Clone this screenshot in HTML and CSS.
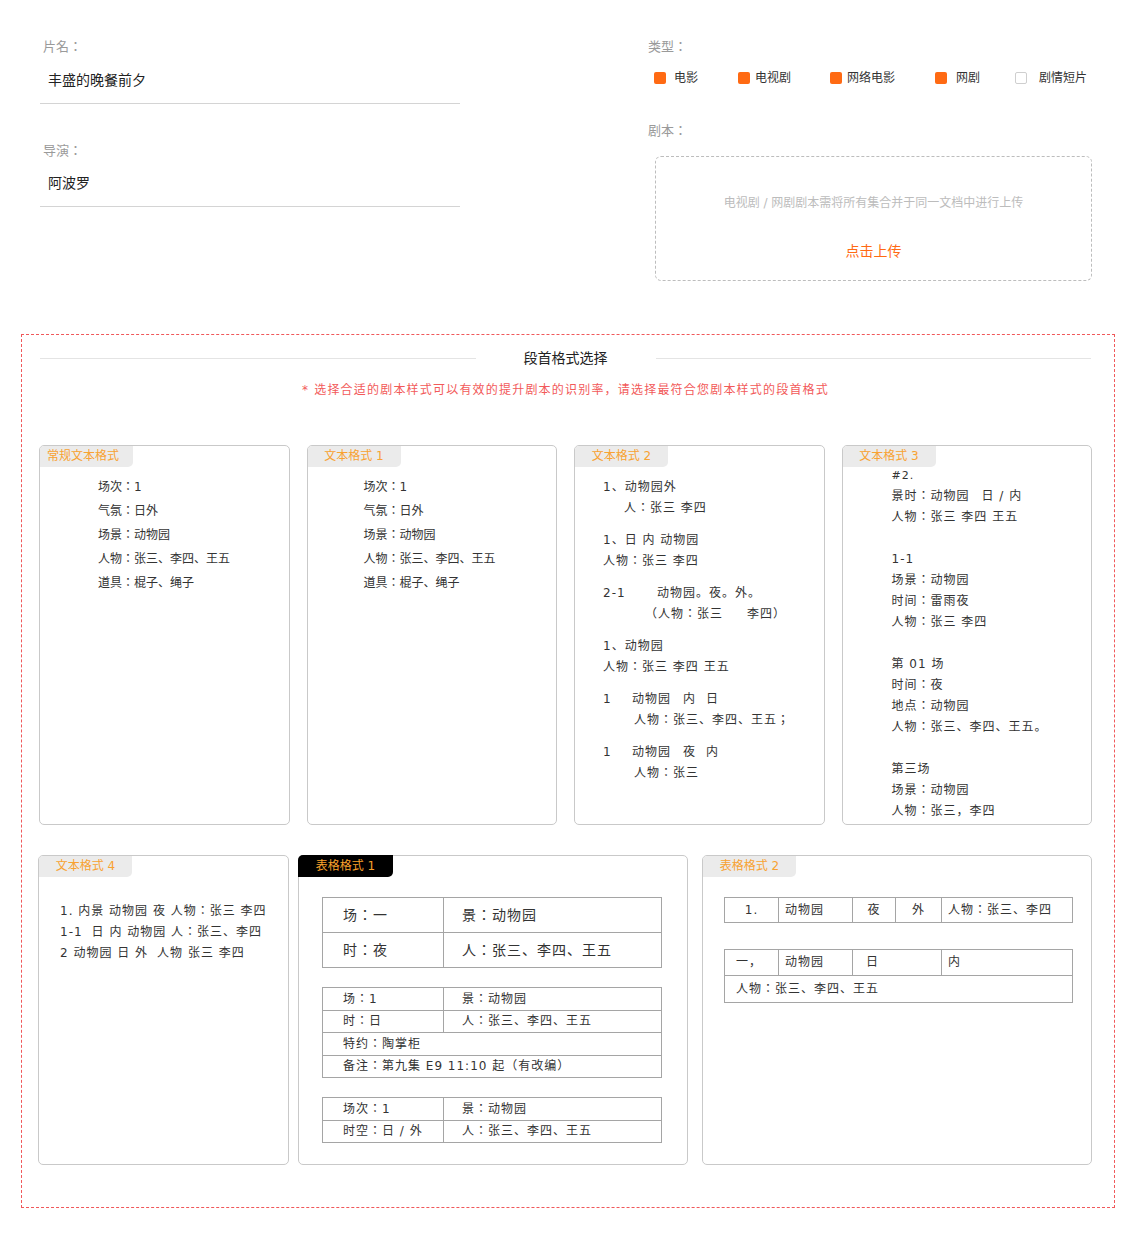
FILE: index.html
```html
<!DOCTYPE html>
<html lang="zh-CN">
<head>
<meta charset="utf-8">
<title>剧本信息</title>
<link rel="stylesheet" href="styles.css">
</head>
<body>
<main class="page">
  <section class="info">
    <div class="info-left">
      <div class="field">
        <div class="label">片名：</div>
        <div class="value">丰盛的晚餐前夕</div>
      </div>
      <div class="field">
        <div class="label">导演：</div>
        <div class="value">阿波罗</div>
      </div>
    </div>
    <div class="info-right">
      <div class="label">类型：</div>
      <div class="types">
        <span class="type ty1"><i class="box"></i>电影</span>
        <span class="type ty2"><i class="box"></i>电视剧</span>
        <span class="type ty3"><i class="box"></i>网络电影</span>
        <span class="type ty4"><i class="box"></i>网剧</span>
        <span class="type ty5"><i class="box off"></i>剧情短片</span>
      </div>
      <div class="label script-label">剧本：</div>
      <div class="upload">
        <p class="upload-tip">电视剧 / 网剧剧本需将所有集合并于同一文档中进行上传</p>
        <p class="upload-btn">点击上传</p>
      </div>
    </div>
  </section>

  <section class="formats">
    <div class="formats-head"><span class="line"></span><h2>段首格式选择</h2><span class="line"></span></div>
    <p class="formats-note">* 选择合适的剧本样式可以有效的提升剧本的识别率，请选择最符合您剧本样式的段首格式</p>

    <div class="row row1">
      <div class="card">
        <span class="tab tab-wide">常规文本格式</span>
        <div class="body plain p1">
          <div>场次：1</div>
          <div>气氛：日外</div>
          <div>场景：动物园</div>
          <div>人物：张三、李四、王五</div>
          <div>道具：棍子、绳子</div>
        </div>
      </div>

      <div class="card">
        <span class="tab">文本格式 1</span>
        <div class="body plain p2">
          <div>场次：1</div>
          <div>气氛：日外</div>
          <div>场景：动物园</div>
          <div>人物：张三、李四、王五</div>
          <div>道具：棍子、绳子</div>
        </div>
      </div>

      <div class="card">
        <span class="tab">文本格式 2</span>
        <div class="body grouped">
          <div class="grp">
            <div>1、动物园外</div>
            <div class="ind-a">人：张三 李四</div>
          </div>
          <div class="grp">
            <div>1、日 内 动物园</div>
            <div>人物：张三 李四</div>
          </div>
          <div class="grp">
            <div><span class="num num-wide">2-1</span>动物园。夜。外。</div>
            <div class="ind-b">（人物：张三<span class="sp sp-24"></span>李四）</div>
          </div>
          <div class="grp">
            <div>1、动物园</div>
            <div>人物：张三 李四 王五</div>
          </div>
          <div class="grp">
            <div><span class="num num-narrow">1</span>动物园<span class="sp sp-12"></span>内<span class="sp sp-10"></span>日</div>
            <div class="ind-c">人物：张三、李四、王五；</div>
          </div>
          <div class="grp">
            <div><span class="num num-narrow">1</span>动物园<span class="sp sp-12"></span>夜<span class="sp sp-10"></span>内</div>
            <div class="ind-c">人物：张三</div>
          </div>
        </div>
      </div>

      <div class="card">
        <span class="tab">文本格式 3</span>
        <div class="body lines3">
          <div class="hash">#2.</div>
          <div>景时：动物园<span class="sp sp-12"></span>日 / 内</div>
          <div>人物：张三 李四 王五</div>
          <div class="blank"></div>
          <div>1-1</div>
          <div>场景：动物园</div>
          <div>时间：雷雨夜</div>
          <div>人物：张三 李四</div>
          <div class="blank"></div>
          <div>第 01 场</div>
          <div>时间：夜</div>
          <div>地点：动物园</div>
          <div>人物：张三、李四、王五。</div>
          <div class="blank"></div>
          <div>第三场</div>
          <div>场景：动物园</div>
          <div>人物：张三，李四</div>
        </div>
      </div>
    </div>

    <div class="row row2">
      <div class="card card-text4">
        <span class="tab">文本格式 4</span>
        <div class="body lines4">
          <div>1. 内景 动物园 夜 人物：张三 李四</div>
          <div>1-1<span class="sp sp-9"></span>日 内 动物园 人：张三、李四</div>
          <div>2 动物园 日 外<span class="sp sp-9"></span>人物 张三 李四</div>
        </div>
      </div>

      <div class="card card-table1">
        <span class="tab tab-dark">表格格式 1</span>
        <div class="body tables1">
          <table class="tbl tbl-big">
            <colgroup><col class="c-first"><col></colgroup>
            <tr><td class="td-a">场：一</td><td class="td-b">景：动物园</td></tr>
            <tr><td class="td-a">时：夜</td><td class="td-b">人：张三、李四、王五</td></tr>
          </table>
          <table class="tbl tbl-small">
            <colgroup><col class="c-first"><col></colgroup>
            <tr><td class="td-a">场：1</td><td class="td-b">景：动物园</td></tr>
            <tr><td class="td-a">时：日</td><td class="td-b">人：张三、李四、王五</td></tr>
            <tr><td class="td-a" colspan="2">特约：陶掌柜</td></tr>
            <tr><td class="td-a" colspan="2">备注：第九集 E9 11:10 起（有改编）</td></tr>
          </table>
          <table class="tbl tbl-small">
            <colgroup><col class="c-first"><col></colgroup>
            <tr><td class="td-a">场次：1</td><td class="td-b">景：动物园</td></tr>
            <tr><td class="td-a">时空：日 / 外</td><td class="td-b">人：张三、李四、王五</td></tr>
          </table>
        </div>
      </div>

      <div class="card card-table2">
        <span class="tab">表格格式 2</span>
        <div class="body tables2">
          <table class="tbl tbl-grid">
            <colgroup><col class="g1"><col class="g2"><col class="g3"><col class="g4"><col class="g5"></colgroup>
            <tr class="r-a"><td class="ctr">1.</td><td class="pl">动物园</td><td class="ctr">夜</td><td class="ctr">外</td><td class="pl">人物：张三、李四</td></tr>
          </table>
          <table class="tbl tbl-grid tbl-grid2">
            <colgroup><col class="g1"><col class="g2"><col class="g3"><col class="g4"><col class="g5"></colgroup>
            <tr class="r-b"><td class="pl-wide">一，</td><td class="pl">动物园</td><td class="pl-day" colspan="2">日</td><td class="pl">内</td></tr>
            <tr class="r-c"><td class="pl-wide" colspan="5">人物：张三、李四、王五</td></tr>
          </table>
        </div>
      </div>
    </div>
  </section>
</main>
</body>
</html>
```

FILE: styles.css
```css
* { box-sizing: border-box; }

html, body {
  margin: 0;
  padding: 0;
  background: #fff;
}

body {
  width: 1132px;
  font-family: "DejaVu Sans", "Noto Sans CJK JP", "Noto Sans CJK SC", sans-serif;
  font-feature-settings: "locl" 0;
  font-size: 12px;
  color: #333;
}

p { margin: 0; }
i { font-style: normal; }

/* ---------- top info ---------- */
.info {
  display: flex;
  padding-top: 37px;
}

.info-left {
  width: 420px;
  margin-left: 40px;
}

.field + .field { margin-top: 37px; }

.label {
  font-size: 13px;
  line-height: 20px;
  color: #9a9a9a;
}

.field .label { padding-left: 3px; }

.value {
  margin-top: 13px;
  padding: 0 0 13px 8px;
  font-size: 14px;
  line-height: 20px;
  color: #222;
  border-bottom: 1px solid #d4d4d4;
}

.field + .field .value { margin-top: 12px; }

.info-right {
  width: 444px;
  margin-left: 188px;
}

.types {
  display: flex;
  align-items: center;
  height: 20px;
  margin-top: 11px;
  padding-left: 6px;
  font-size: 12px;
  color: #333;
}

.type {
  display: flex;
  align-items: center;
  line-height: 20px;
}

.box {
  display: block;
  width: 12px;
  height: 12px;
  border-radius: 2px;
  background: #ff6a13;
}

.box.off {
  background: #fff;
  border: 1px solid #cfcfcf;
}

.ty1 { width: 84px; gap: 8px; }
.ty2 { width: 92px; gap: 5px; }
.ty3 { width: 105px; gap: 5px; }
.ty4 { width: 80px; gap: 9px; }
.ty5 { gap: 12px; }

.script-label { margin-top: 33px; }

.upload {
  width: 437px;
  height: 125px;
  margin: 15px 0 0 7px;
  padding-top: 36px;
  border: 1px dashed #bdbdbd;
  border-radius: 6px;
  text-align: center;
}

.upload-tip {
  font-size: 12px;
  line-height: 20px;
  color: #bcbcbc;
}

.upload-btn {
  margin-top: 28px;
  font-size: 14px;
  line-height: 20px;
  color: #ff6a13;
}

/* ---------- formats ---------- */
.formats {
  width: 1094px;
  margin: 53px 0 0 21px;
  padding: 13px 22px 42px 17px;
  border: 1px dashed #f0585a;
}

.formats-head {
  display: flex;
  align-items: center;
  height: 20px;
  margin: 0 1px;
}

.formats-head .line {
  flex: 1;
  height: 1px;
  background: #e4e4e4;
}

.formats-head h2 {
  margin: 0;
  padding: 0 48px;
  font-size: 14px;
  font-weight: normal;
  line-height: 20px;
  color: #222;
}

.formats-note {
  margin-top: 12px;
  font-size: 12px;
  line-height: 20px;
  letter-spacing: 1.2px;
  text-align: center;
  color: #f25a5a;
}

.row1 {
  display: grid;
  grid-template-columns: repeat(4, 1fr);
  column-gap: 17px;
  margin-top: 45px;
}

.row2 {
  display: flex;
  margin: 30px 0 0 -1px;
}

.card {
  position: relative;
  height: 380px;
  border: 1px solid #c9c9c9;
  border-radius: 5px;
  background: #fff;
}

.row2 .card { height: 310px; }
.card-text4 { width: 251px; }
.card-table1 { width: 390px; margin-left: 9px; }
.card-table2 { width: 390px; margin-left: auto; }

.tab {
  position: absolute;
  top: 0;
  left: 0;
  width: 93px;
  height: 21px;
  line-height: 21px;
  font-size: 12px;
  text-align: center;
  color: #f8a232;
  background: #ebebeb;
  border-radius: 4px 0 5px 0;
}

.tab-wide {
  text-align: left;
  padding-left: 7px;
}

.tab-dark {
  top: -1px;
  left: -1px;
  width: 95px;
  height: 22px;
  line-height: 22px;
  background: #000;
  color: #f9a02b;
  border-radius: 5px 0 5px 0;
}

.body { color: #333; white-space: nowrap; }

.plain {
  padding-top: 29px;
  line-height: 24px;
}
.p1 { padding-left: 58px; }
.p2 { padding-left: 56px; }

.grouped {
  padding: 31px 0 0 28px;
  line-height: 21px;
  letter-spacing: 1px;
}
.grp + .grp { margin-top: 11px; }
.ind-a { padding-left: 21px; }
.ind-b { padding-left: 42px; }
.ind-c { padding-left: 31px; }

.num { display: inline-block; }
.num-wide { width: 54px; }
.num-narrow { width: 29px; }

.sp { display: inline-block; }
.sp-9 { width: 9px; }
.sp-10 { width: 10px; }
.sp-12 { width: 12px; }
.sp-24 { width: 24px; }

.lines3 {
  padding: 19px 0 0 49px;
  line-height: 21px;
  letter-spacing: 1px;
}
.blank { height: 21px; }
.hash { font-size: 11px; }

.lines4 {
  padding: 45px 0 0 21px;
  line-height: 21px;
  letter-spacing: 1px;
}

/* ---------- tables ---------- */
.tbl {
  border-collapse: collapse;
  table-layout: fixed;
  color: #333;
}

.tbl td {
  padding: 0;
  border: 1px solid #a5a5a5;
  white-space: nowrap;
  vertical-align: middle;
}

.tables1 { padding: 41px 0 0 23px; }
.tables1 .tbl { width: 340px; }
.tables1 .tbl + .tbl { margin-top: 19px; }
.c-first { width: 121px; }

.tbl-big td {
  font-size: 14px;
  line-height: 34px;
  letter-spacing: 1px;
}

.tbl-small td {
  font-size: 12px;
  letter-spacing: 1px;
  line-height: 22px;
}
.tbl-small tr:nth-child(even) td { line-height: 21px; }

.td-a { padding-left: 20px !important; }
.td-b { padding-left: 18px !important; }

.tables2 { padding: 41px 0 0 21px; }
.tables2 .tbl { width: 348px; }
.tbl-grid2 { margin-top: 26px; }

.tbl-grid td {
  font-size: 12px;
  letter-spacing: 1px;
}

.g1 { width: 54px; }
.g2 { width: 74px; }
.g3 { width: 43px; }
.g4 { width: 46px; }
.g5 { width: 131px; }

.r-a td { line-height: 24px; }
.r-b td { line-height: 25px; }
.r-c td { line-height: 26px; }

.ctr { text-align: center; }
.pl { padding-left: 6px !important; }
.pl-wide { padding-left: 11px !important; }
.pl-day { padding-left: 13px !important; }
```
